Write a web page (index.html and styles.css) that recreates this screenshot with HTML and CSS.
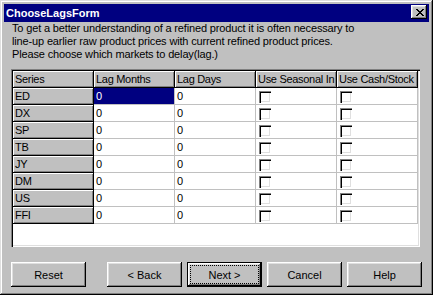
FILE: index.html
```html
<!DOCTYPE html>
<html lang="en">
<head>
    <link rel="stylesheet" href="styles.css">
</head>
<body>
    <div class="window">
        <!-- Title Bar -->
        <div class="titlebar">
            <span class="title">ChooseLagsForm</span>
            <button class="close-btn" aria-label="Close">
                <svg width="8" height="7" viewBox="0 0 8 7" shape-rendering="crispEdges">
                    <path d="M0 0h2v1H0zM6 0h2v1H6zM1 1h2v1H1zM5 1h2v1H5zM2 2h4v1H2zM3 3h2v1H3zM2 4h4v1H2zM1 5h2v1H1zM5 5h2v1H5zM0 6h2v1H0zM6 6h2v1H6z" fill="#000"/>
                </svg>
            </button>
        </div>

        <!-- Intro Text -->
        <p class="intro">
            To get a better understanding of a refined product it is often necessary to<br>
            line-up earlier raw product prices with current refined product prices.<br>
            Please choose which markets to delay(lag.)
        </p>

        <!-- Lags Grid -->
        <div class="grid">
            <div class="grid-body">
                <div class="cell head">Series</div>
                <div class="cell head">Lag Months</div>
                <div class="cell head">Lag Days</div>
                <div class="cell head">Use Seasonal In</div>
                <div class="cell head">Use Cash/Stock</div>

                <div class="cell head">ED</div>
                <div class="cell selected">0</div>
                <div class="cell">0</div>
                <div class="cell"><span class="check"></span></div>
                <div class="cell"><span class="check"></span></div>

                <div class="cell head">DX</div>
                <div class="cell">0</div>
                <div class="cell">0</div>
                <div class="cell"><span class="check"></span></div>
                <div class="cell"><span class="check"></span></div>

                <div class="cell head">SP</div>
                <div class="cell">0</div>
                <div class="cell">0</div>
                <div class="cell"><span class="check"></span></div>
                <div class="cell"><span class="check"></span></div>

                <div class="cell head">TB</div>
                <div class="cell">0</div>
                <div class="cell">0</div>
                <div class="cell"><span class="check"></span></div>
                <div class="cell"><span class="check"></span></div>

                <div class="cell head">JY</div>
                <div class="cell">0</div>
                <div class="cell">0</div>
                <div class="cell"><span class="check"></span></div>
                <div class="cell"><span class="check"></span></div>

                <div class="cell head">DM</div>
                <div class="cell">0</div>
                <div class="cell">0</div>
                <div class="cell"><span class="check"></span></div>
                <div class="cell"><span class="check"></span></div>

                <div class="cell head">US</div>
                <div class="cell">0</div>
                <div class="cell">0</div>
                <div class="cell"><span class="check"></span></div>
                <div class="cell"><span class="check"></span></div>

                <div class="cell head">FFI</div>
                <div class="cell">0</div>
                <div class="cell">0</div>
                <div class="cell"><span class="check"></span></div>
                <div class="cell"><span class="check"></span></div>
            </div>
        </div>

        <!-- Buttons -->
        <div class="buttons">
            <button class="btn reset">Reset</button>
            <button class="btn">&lt; Back</button>
            <button class="btn default"><span class="focus">Next &gt;</span></button>
            <button class="btn">Cancel</button>
            <button class="btn">Help</button>
        </div>
    </div>
</body>
</html>
```

FILE: styles.css
```css
/* General Styles */
body {
    margin: 0;
    padding: 0;
    font-family: "Liberation Sans", Arial, sans-serif;
    font-size: 11px;
    color: #000;
    background-color: #c0c0c0;
}

.window {
    width: 433px;
    height: 295px;
    box-sizing: border-box;
    padding: 4px;
    background-color: #c0c0c0;
    box-shadow: inset -1px -1px #000, inset 1px 1px #dfdfdf,
                inset -2px -2px #808080, inset 2px 2px #fff;
}

/* Title Bar */
.titlebar {
    height: 18px;
    display: flex;
    justify-content: space-between;
    align-items: flex-start;
    padding: 0 2px 0 2px;
    background-color: #000080;
}

.title {
    color: #fff;
    font-weight: bold;
    font-size: 11px;
    line-height: 18px;
}

.close-btn {
    width: 16px;
    height: 14px;
    margin-top: 1px;
    padding: 0 0 0 1px;
    border: none;
    display: flex;
    justify-content: center;
    align-items: center;
    background-color: #c0c0c0;
    box-shadow: inset -1px -1px #000, inset 1px 1px #fff,
                inset -2px -2px #808080, inset 2px 2px #dfdfdf;
}

/* Intro Text */
.intro {
    margin: 0 0 8px 8px;
    line-height: 13px;
    letter-spacing: -0.15px;
}

/* Grid */
.grid {
    width: 409px;
    height: 178px;
    margin-left: 7px;
    box-sizing: border-box;
    padding: 2px;
    background-color: #fff;
    box-shadow: inset 1px 1px #808080, inset 2px 2px #000,
                inset -1px -1px #fff, inset -2px -2px #dfdfdf;
}

.grid-body {
    display: grid;
    grid-template-columns: repeat(5, 81px);
    grid-auto-rows: 17px;
}

.cell {
    box-sizing: border-box;
    padding-left: 2px;
    line-height: 16px;
    white-space: nowrap;
    overflow: hidden;
    color: #000;
    border-right: 1px solid #c0c0c0;
    border-bottom: 1px solid #c0c0c0;
    background-color: #fff;
}

.cell.head {
    letter-spacing: -0.3px;
    background-color: #c0c0c0;
    border-right-color: #000;
    border-bottom-color: #000;
    box-shadow: inset 1px 1px #fff, inset -1px -1px #808080;
}

.cell.selected {
    background-color: #000080;
    color: #fff;
}

.check {
    display: block;
    width: 12px;
    height: 12px;
    margin: 3px 0 0 1px;
    box-sizing: border-box;
    background-color: #fff;
    box-shadow: inset 1px 1px #808080, inset 2px 2px #000,
                inset -1px -1px #fff, inset -2px -2px #dfdfdf;
}

/* Buttons */
.buttons {
    display: flex;
    gap: 5px;
    margin: 15px 0 0 7px;
}

.btn {
    width: 75px;
    height: 25px;
    padding: 0;
    border: none;
    font-family: "Liberation Sans", Arial, sans-serif;
    font-size: 11px;
    color: #000;
    background-color: #c0c0c0;
    box-shadow: inset -1px -1px #000, inset 1px 1px #fff,
                inset -2px -2px #808080, inset 2px 2px #dfdfdf;
}

.btn.reset {
    margin-right: 16px;
}

.btn.default {
    box-shadow: inset 0 0 0 1px #000, inset -2px -2px #000, inset 2px 2px #fff,
                inset -3px -3px #808080, inset 3px 3px #dfdfdf;
}

.focus {
    display: flex;
    justify-content: center;
    align-items: center;
    margin: 0 4px;
    height: 17px;
    outline: 1px dotted #000;
}
```
